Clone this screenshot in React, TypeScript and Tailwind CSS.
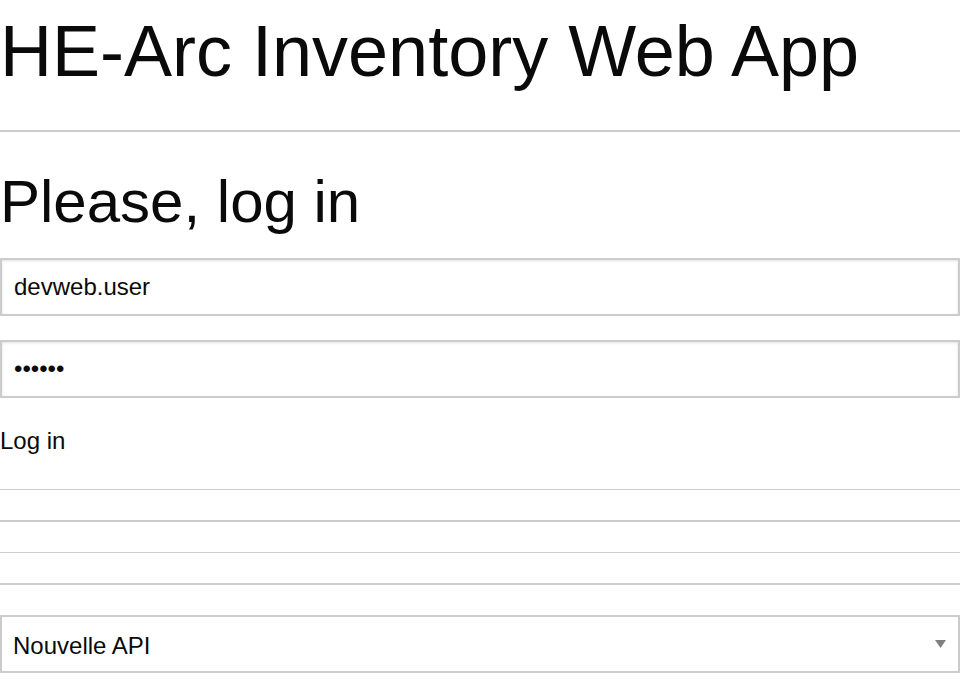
import React from "react";

export default function App() {
  const font = { fontFamily: '"Liberation Sans", Arial, sans-serif' };
  return (
    <div className="w-[961px] h-[690px] bg-white text-[#0a0a0a] overflow-hidden" style={font}>
      <div className="w-[960px] flex flex-col">
        <h1 className="text-[72px] leading-[72px] mt-[15px] font-normal whitespace-nowrap">HE-Arc Inventory Web App</h1>
        <div className="mt-[43px] border-t-2 border-[#cccccc]" />
        <h2 className="text-[60px] leading-[60px] mt-[40px] font-normal whitespace-nowrap">Please, log in</h2>
        <input
          type="text"
          defaultValue="devweb.user"
          className="mt-[26px] h-[58px] w-[960px] border-2 border-[#cccccc] bg-white pl-[12px] text-[24px] text-[#0a0a0a] outline-none shadow-[inset_0_1px_3px_#e2e2e2]"
          style={font}
        />
        <input
          type="password"
          defaultValue="123456"
          className="mt-[24px] h-[58px] w-[960px] border-2 border-[#cccccc] bg-white pl-[12px] text-[24px] text-[#0a0a0a] outline-none shadow-[inset_0_1px_3px_#e2e2e2]"
          style={font}
        />
        <button className="mt-[31px] self-start text-[24px] leading-[24px] p-0 bg-transparent text-[#0a0a0a]" style={font}>
          Log in
        </button>
        <div className="mt-[36px] border-t border-[#cccccc]" />
        <div className="mt-[30px] border-t-2 border-[#cccccc]" />
        <div className="mt-[30px] border-t border-[#cccccc]" />
        <div className="mt-[30px] border-t-2 border-[#cccccc]" />
        <div className="relative mt-[30px] w-[960px]">
          <select
            defaultValue="new"
            className="appearance-none h-[58px] w-[960px] border-2 border-[#cccccc] bg-white pl-[11px] pt-[3px] text-[24px] text-[#0a0a0a] outline-none"
            style={font}
          >
            <option value="new">Nouvelle API</option>
            <option value="old">Ancienne API</option>
          </select>
          <svg
            className="absolute left-[935px] top-[25px] pointer-events-none"
            width="11"
            height="8"
            viewBox="0 0 11 8"
          >
            <polygon points="0,0 11,0 5.5,8" fill="#808080" />
          </svg>
        </div>
      </div>
    </div>
  );
}
